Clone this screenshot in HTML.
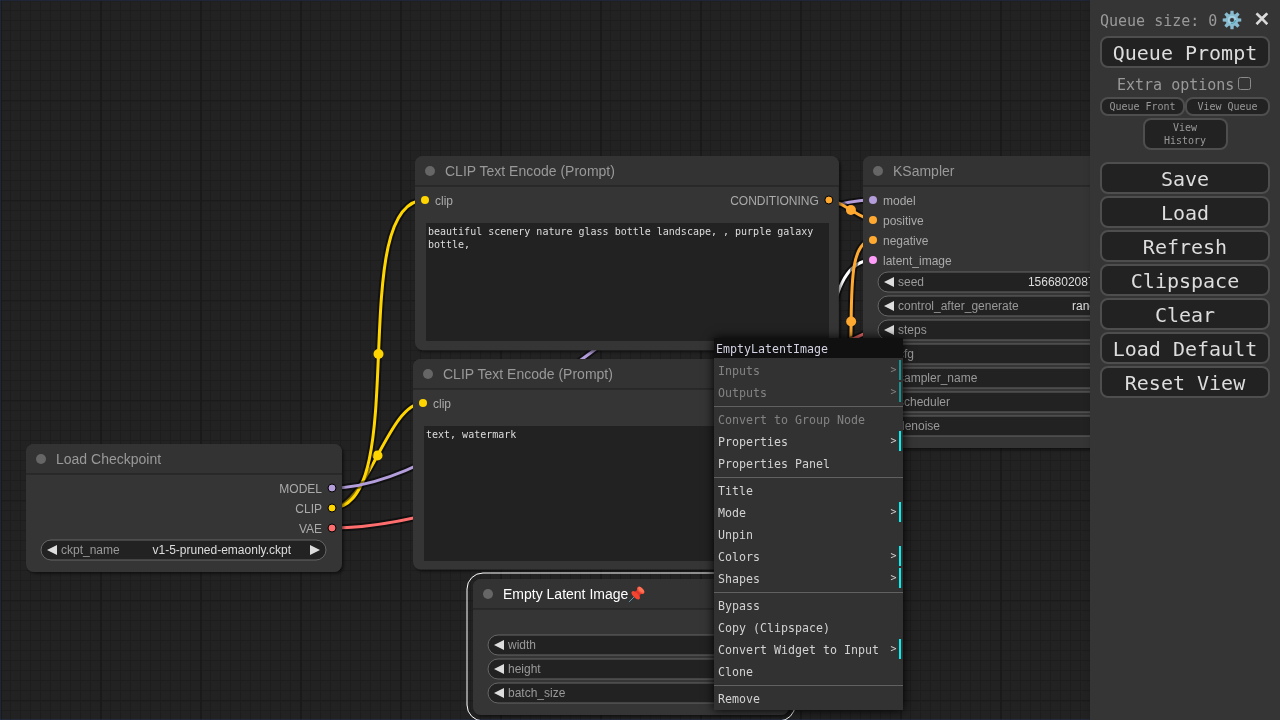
<!DOCTYPE html>
<html lang="en"><head><meta charset="utf-8"><title>ComfyUI</title>
<style>
html,body{margin:0;padding:0;}
body{width:1280px;height:720px;overflow:hidden;background:#222;position:relative;font-family:"DejaVu Sans Mono", "Liberation Mono", monospace;}
.layer{position:absolute;left:0;top:0;width:1280px;height:720px;will-change:transform;}
.graph{position:absolute;left:0;top:0;display:block;}
.t14{font:14px "Liberation Sans", Arial, sans-serif;}
.t12{font:12px "Liberation Sans", Arial, sans-serif;}
.ta{position:absolute;box-sizing:border-box;background:#222;color:#ddd;font:10px/13px "DejaVu Sans Mono", "Liberation Mono", monospace;padding:2px;white-space:pre-wrap;overflow:hidden;}
.menu{position:absolute;left:1090px;top:0;width:190px;height:720px;background:#353535;color:#999;font-size:15px;box-shadow:3px 3px 8px rgba(0,0,0,.4);}
.menu div,.menu span{position:absolute;box-sizing:border-box;white-space:nowrap;}
.menu .lbl{font-size:15px;line-height:20px;height:20px;}
.menu .b{left:10px;width:170px;height:32px;border:2px solid #4e4e4e;border-radius:8px;background:#222;color:#ddd;font-size:20px;line-height:28px;padding-top:1px;text-align:center;}
.menu .sb{width:85px;border:2px solid #4e4e4e;border-radius:8px;background:#222;color:#999;font-size:10px;line-height:13px;text-align:center;padding-top:1px;}
.menu .cb{left:148px;top:77px;width:13px;height:13px;border:1px solid #8a8a8a;border-radius:2.5px;background:#353535;}
.menu svg{position:absolute;display:block;}
.menu .close{left:160px;top:4px;width:24px;height:30px;font:20px/30px "DejaVu Sans", "Liberation Sans", sans-serif;color:#ddd;text-align:center;-webkit-text-stroke:0.6px #ddd;}
.ctx{position:absolute;left:714px;top:338px;width:189px;height:372px;background:#323232;box-shadow:0 0 10px #000;font:11.63px/16px "DejaVu Sans Mono", "Liberation Mono", monospace;color:#d2d2d2;}
.ctx .tt{background:#101010;color:#c8c8d7;padding:3px 2px 1px 2px;height:20px;box-sizing:border-box;white-space:nowrap;}
.ctx .tt{color:#d2d2e2;}
.ctx .e{margin:2px;padding:3px 2px 1px 2px;height:20px;box-sizing:border-box;position:relative;white-space:nowrap;}
.ctx .e.dis{opacity:.5;}
.ctx .e.sub{border-right:2px solid #00f2f2;}
.ctx .e .m{position:absolute;right:2.5px;top:1.5px;font-size:10px;}
.ctx .sep{border-top:1px solid #303030;border-bottom:1px solid #616161;height:0;margin:3px 0 2px 0;}
</style></head>
<body>
<div class="layer">
<svg class="graph" width="1280" height="720" viewBox="0 0 1280 720">
<defs>
<pattern id="grid" width="100" height="100" patternUnits="userSpaceOnUse">
<rect width="100" height="100" fill="#222"/>
<path d="M10.5 0V100M20.5 0V100M30.5 0V100M40.5 0V100M50.5 0V100M60.5 0V100M70.5 0V100M80.5 0V100M90.5 0V100M0 10.5H100M0 20.5H100M0 30.5H100M0 40.5H100M0 50.5H100M0 60.5H100M0 70.5H100M0 80.5H100M0 90.5H100" stroke="#1d1d1d" stroke-width="1" fill="none"/>
<path d="M0 1.5H100" stroke="#1f1f1f" stroke-width="1" fill="none"/><path d="M0 .5H100" stroke="#1b1b1b" stroke-width="1" fill="none"/><path d="M1 0V100" stroke="#1a1a1a" stroke-width="2" fill="none"/>
</pattern>
<filter id="sh" x="-5%" y="-10%" width="110%" height="125%"><feDropShadow dx="2" dy="2" stdDeviation="1.5" flood-color="#000" flood-opacity=".5"/></filter>
</defs>
<rect width="1280" height="720" fill="url(#grid)"/>
<rect x="0" y="0" width="1280" height="720" fill="none" stroke="#235" stroke-width="1"/>
<g fill="none" stroke-linecap="butt">
<path d="M332 508C366.74 508 388.26 403 423 403" stroke="#000" stroke-opacity=".5" stroke-width="7"/><path d="M332 508C366.74 508 388.26 403 423 403" stroke="#FFD500" stroke-width="3"/><circle cx="377.5" cy="455.5" r="5" fill="#FFD500" stroke="none"/>
<path d="M332 508C412.43 508 344.57 200 425 200" stroke="#000" stroke-opacity=".5" stroke-width="7"/><path d="M332 508C412.43 508 344.57 200 425 200" stroke="#FFD500" stroke-width="3"/><circle cx="378.5" cy="354" r="5" fill="#FFD500" stroke="none"/>
<path d="M779 623C872.74 623 779.26 260 873 260" stroke="#000" stroke-opacity=".5" stroke-width="7"/><path d="M779 623C872.74 623 779.26 260 873 260" stroke="#FFF" stroke-width="3"/><circle cx="826" cy="441.5" r="5" fill="#FFF" stroke="none"/>
<path d="M332 488C485.22 488 719.78 200 873 200" stroke="#000" stroke-opacity=".5" stroke-width="7"/><path d="M332 488C485.22 488 719.78 200 873 200" stroke="#B39DDB" stroke-width="3"/><circle cx="602.5" cy="344" r="5" fill="#B39DDB" stroke="none"/>
<path d="M828.85 200C840.97 200 860.88 220 873 220" stroke="#000" stroke-opacity=".5" stroke-width="7"/><path d="M828.85 200C840.97 200 860.88 220 873 220" stroke="#FFA931" stroke-width="3"/><circle cx="850.92" cy="210" r="5" fill="#FFA931" stroke="none"/>
<path d="M829.28 403C871.47 403 830.81 240 873 240" stroke="#000" stroke-opacity=".5" stroke-width="7"/><path d="M829.28 403C871.47 403 830.81 240 873 240" stroke="#FFA931" stroke-width="3"/><circle cx="851.14" cy="321.5" r="5" fill="#FFA931" stroke="none"/>
<path d="M332 528C566.57 528 984.43 222 1219 222" stroke="#000" stroke-opacity=".5" stroke-width="7"/><path d="M332 528C566.57 528 984.43 222 1219 222" stroke="#FF6E6E" stroke-width="3"/><circle cx="775.5" cy="375" r="5" fill="#FF6E6E" stroke="none"/>
</g>
<g transform="translate(413,389)">
<rect x="0" y="-30" width="426.28" height="210.61" rx="8" fill="#353535" filter="url(#sh)"/>
<path d="M0 0V-22a8 8 0 0 1 8-8H418.28a8 8 0 0 1 8 8V0Z" fill="#333"/>
<rect x="0" y="-1" width="426.28" height="2" fill="#000" fill-opacity=".2"/>
<circle cx="15" cy="-15" r="5" fill="#666"/>
<text x="30" y="-10" class="t14" fill="#999">CLIP Text Encode (Prompt)</text>
<circle cx="10" cy="14" r="4" fill="#FFD500"/><text x="20" y="19" class="t12" fill="#AAA">clip</text>
<circle cx="416.28" cy="14" r="4" fill="#FFA931" stroke="#000" stroke-width="1"/><text x="406.28" y="19" class="t12" fill="#AAA" text-anchor="end">CONDITIONING</text>
</g>
<g transform="translate(415,186)">
<rect x="0" y="-30" width="423.85" height="194.31" rx="8" fill="#353535" filter="url(#sh)"/>
<path d="M0 0V-22a8 8 0 0 1 8-8H415.85a8 8 0 0 1 8 8V0Z" fill="#333"/>
<rect x="0" y="-1" width="423.85" height="2" fill="#000" fill-opacity=".2"/>
<circle cx="15" cy="-15" r="5" fill="#666"/>
<text x="30" y="-10" class="t14" fill="#999">CLIP Text Encode (Prompt)</text>
<circle cx="10" cy="14" r="4" fill="#FFD500"/><text x="20" y="19" class="t12" fill="#AAA">clip</text>
<circle cx="413.85" cy="14" r="4" fill="#FFA931" stroke="#000" stroke-width="1"/><text x="403.85" y="19" class="t12" fill="#AAA" text-anchor="end">CONDITIONING</text>
</g>
<g transform="translate(863,186)">
<rect x="0" y="-30" width="316" height="292" rx="8" fill="#353535" filter="url(#sh)"/>
<path d="M0 0V-22a8 8 0 0 1 8-8H308a8 8 0 0 1 8 8V0Z" fill="#333"/>
<rect x="0" y="-1" width="316" height="2" fill="#000" fill-opacity=".2"/>
<circle cx="15" cy="-15" r="5" fill="#666"/>
<text x="30" y="-10" class="t14" fill="#999">KSampler</text>
<circle cx="10" cy="14" r="4" fill="#B39DDB"/><text x="20" y="19" class="t12" fill="#AAA">model</text>
<circle cx="10" cy="34" r="4" fill="#FFA931"/><text x="20" y="39" class="t12" fill="#AAA">positive</text>
<circle cx="10" cy="54" r="4" fill="#FFA931"/><text x="20" y="59" class="t12" fill="#AAA">negative</text>
<circle cx="10" cy="74" r="4" fill="#FF9CF9"/><text x="20" y="79" class="t12" fill="#AAA">latent_image</text>
<circle cx="306" cy="14" r="4" fill="#FF9CF9" stroke="#000" stroke-width="1"/><text x="296" y="19" class="t12" fill="#AAA" text-anchor="end">LATENT</text>
<rect x="15" y="86" width="285" height="20" rx="10" fill="#222" stroke="#666" stroke-width="1"/><path d="M31 91L21 96L31 101Z" fill="#DDD"/><path d="M284 91L294 96L284 101Z" fill="#DDD"/><text x="35" y="100" class="t12" fill="#999">seed</text><text x="265" y="100" class="t12" fill="#DDD" text-anchor="end">156680208700286</text>
<rect x="15" y="110" width="285" height="20" rx="10" fill="#222" stroke="#666" stroke-width="1"/><path d="M31 115L21 120L31 125Z" fill="#DDD"/><path d="M284 115L294 120L284 125Z" fill="#DDD"/><text x="35" y="124" class="t12" fill="#999">control_after_generate</text><text x="265" y="124" class="t12" fill="#DDD" text-anchor="end">randomize</text>
<rect x="15" y="134" width="285" height="20" rx="10" fill="#222" stroke="#666" stroke-width="1"/><path d="M31 139L21 144L31 149Z" fill="#DDD"/><path d="M284 139L294 144L284 149Z" fill="#DDD"/><text x="35" y="148" class="t12" fill="#999">steps</text><text x="265" y="148" class="t12" fill="#DDD" text-anchor="end">20</text>
<rect x="15" y="158" width="285" height="20" rx="10" fill="#222" stroke="#666" stroke-width="1"/><path d="M31 163L21 168L31 173Z" fill="#DDD"/><path d="M284 163L294 168L284 173Z" fill="#DDD"/><text x="35" y="172" class="t12" fill="#999">cfg</text><text x="265" y="172" class="t12" fill="#DDD" text-anchor="end">8.0</text>
<rect x="15" y="182" width="285" height="20" rx="10" fill="#222" stroke="#666" stroke-width="1"/><path d="M31 187L21 192L31 197Z" fill="#DDD"/><path d="M284 187L294 192L284 197Z" fill="#DDD"/><text x="35" y="196" class="t12" fill="#999">sampler_name</text><text x="265" y="196" class="t12" fill="#DDD" text-anchor="end">euler</text>
<rect x="15" y="206" width="285" height="20" rx="10" fill="#222" stroke="#666" stroke-width="1"/><path d="M31 211L21 216L31 221Z" fill="#DDD"/><path d="M284 211L294 216L284 221Z" fill="#DDD"/><text x="35" y="220" class="t12" fill="#999">scheduler</text><text x="265" y="220" class="t12" fill="#DDD" text-anchor="end">normal</text>
<rect x="15" y="230" width="285" height="20" rx="10" fill="#222" stroke="#666" stroke-width="1"/><path d="M31 235L21 240L31 245Z" fill="#DDD"/><path d="M284 235L294 240L284 245Z" fill="#DDD"/><text x="35" y="244" class="t12" fill="#999">denoise</text><text x="265" y="244" class="t12" fill="#DDD" text-anchor="end">1.00</text>
</g>
<g transform="translate(26,474)">
<rect x="0" y="-30" width="316" height="128" rx="8" fill="#353535" filter="url(#sh)"/>
<path d="M0 0V-22a8 8 0 0 1 8-8H308a8 8 0 0 1 8 8V0Z" fill="#333"/>
<rect x="0" y="-1" width="316" height="2" fill="#000" fill-opacity=".2"/>
<circle cx="15" cy="-15" r="5" fill="#666"/>
<text x="30" y="-10" class="t14" fill="#999">Load Checkpoint</text>
<circle cx="306" cy="14" r="4" fill="#B39DDB" stroke="#000" stroke-width="1"/><text x="296" y="19" class="t12" fill="#AAA" text-anchor="end">MODEL</text>
<circle cx="306" cy="34" r="4" fill="#FFD500" stroke="#000" stroke-width="1"/><text x="296" y="39" class="t12" fill="#AAA" text-anchor="end">CLIP</text>
<circle cx="306" cy="54" r="4" fill="#FF6E6E" stroke="#000" stroke-width="1"/><text x="296" y="59" class="t12" fill="#AAA" text-anchor="end">VAE</text>
<rect x="15" y="66" width="285" height="20" rx="10" fill="#222" stroke="#666" stroke-width="1"/><path d="M31 71L21 76L31 81Z" fill="#DDD"/><path d="M284 71L294 76L284 81Z" fill="#DDD"/><text x="35" y="80" class="t12" fill="#999">ckpt_name</text><text x="265" y="80" class="t12" fill="#DDD" text-anchor="end">v1-5-pruned-emaonly.ckpt</text>
</g>
<g transform="translate(473,609)">
<rect x="0" y="-30" width="316" height="136" rx="8" fill="#353535" filter="url(#sh)"/>
<path d="M0 0V-22a8 8 0 0 1 8-8H308a8 8 0 0 1 8 8V0Z" fill="#333"/>
<rect x="0" y="-1" width="316" height="2" fill="#000" fill-opacity=".2"/>
<circle cx="15" cy="-15" r="5" fill="#666"/>
<text x="30" y="-10" class="t14" fill="#FFF">Empty Latent Image</text>
<g transform="translate(162.7,-13.7) rotate(-45)"><path d="M-9.6 0L-2 0" stroke="#68a9c2" stroke-width="0.8" fill="none"/><path d="M0 -4.6Q3.6 -1.3 7 -3.6L7 3.6Q3.6 1.3 0 4.6Z" fill="#d9352c"/><ellipse cx="0" cy="0" rx="2.4" ry="5.3" fill="#f4442f"/><ellipse cx="7.1" cy="0" rx="2.5" ry="4.4" fill="#f9503a"/><ellipse cx="7.7" cy="0" rx="1.7" ry="3.7" fill="#ff7355"/></g>
<rect x="-6" y="-36" width="328" height="148" rx="16" fill="none" stroke="#FFF" stroke-width="1"/>
<circle cx="306" cy="14" r="4" fill="#FF9CF9" stroke="#000" stroke-width="1"/><text x="296" y="19" class="t12" fill="#AAA" text-anchor="end">LATENT</text>
<rect x="15" y="26" width="285" height="20" rx="10" fill="#222" stroke="#666" stroke-width="1"/><path d="M31 31L21 36L31 41Z" fill="#DDD"/><path d="M284 31L294 36L284 41Z" fill="#DDD"/><text x="35" y="40" class="t12" fill="#999">width</text><text x="265" y="40" class="t12" fill="#DDD" text-anchor="end">512</text>
<rect x="15" y="50" width="285" height="20" rx="10" fill="#222" stroke="#666" stroke-width="1"/><path d="M31 55L21 60L31 65Z" fill="#DDD"/><path d="M284 55L294 60L284 65Z" fill="#DDD"/><text x="35" y="64" class="t12" fill="#999">height</text><text x="265" y="64" class="t12" fill="#DDD" text-anchor="end">512</text>
<rect x="15" y="74" width="285" height="20" rx="10" fill="#222" stroke="#666" stroke-width="1"/><path d="M31 79L21 84L31 89Z" fill="#DDD"/><path d="M284 79L294 84L284 89Z" fill="#DDD"/><text x="35" y="88" class="t12" fill="#999">batch_size</text><text x="265" y="88" class="t12" fill="#DDD" text-anchor="end">1</text>
</g>
</svg>
<div class="ta" style="left:426px;top:223px;width:403px;height:118px;">beautiful scenery nature glass bottle landscape, , purple galaxy bottle,</div>
<div class="ta" style="left:424px;top:426px;width:405px;height:135px;">text, watermark</div>
<div class="menu">
<div class="lbl" style="left:10px;top:11px;">Queue size: 0</div>
<svg style="left:131.2px;top:9.4px" width="22" height="22" viewBox="-11 -11 22 22"><path d="M-1.8 -5.83L-1.54 -9.27L1.54 -9.27L1.8 -5.83L2.85 -5.4L5.46 -7.65L7.65 -5.46L5.4 -2.85L5.83 -1.8L9.27 -1.54L9.27 1.54L5.83 1.8L5.4 2.85L7.65 5.46L5.46 7.65L2.85 5.4L1.8 5.83L1.54 9.27L-1.54 9.27L-1.8 5.83L-2.85 5.4L-5.46 7.65L-7.65 5.46L-5.4 2.85L-5.83 1.8L-9.27 1.54L-9.27 -1.54L-5.83 -1.8L-5.4 -2.85L-7.65 -5.46L-5.46 -7.65L-2.85 -5.4Z" fill="#88bbd0"/><circle r="6.1" fill="#88bbd0"/><circle r="3.4" fill="none" stroke="#a8d4e4" stroke-width="1.3"/><path d="M3.4 0A3.4 3.4 0 0 1 -1.2 3.2" fill="none" stroke="#4fa0b5" stroke-width="1.3"/><circle r="2" fill="#353535"/></svg>
<div class="close">✕</div>
<div class="b" style="top:36px">Queue Prompt</div>
<div class="lbl" style="left:27px;top:75px;">Extra options</div><span class="cb"></span>
<div class="sb" style="left:10px;top:97px;height:19px;">Queue Front</div><div class="sb" style="left:95px;top:97px;height:19px;">View Queue</div>
<div class="sb" style="left:52.5px;top:118px;height:32px;">View<br>History</div>
<div class="b" style="top:162px">Save</div>
<div class="b" style="top:196px">Load</div>
<div class="b" style="top:230px">Refresh</div>
<div class="b" style="top:264px">Clipspace</div>
<div class="b" style="top:298px">Clear</div>
<div class="b" style="top:332px">Load Default</div>
<div class="b" style="top:366px">Reset View</div>
</div>
<div class="ctx">
<div class="tt">EmptyLatentImage</div>
<div class="e sub dis">Inputs<span class="m">&gt;</span></div>
<div class="e sub dis">Outputs<span class="m">&gt;</span></div>
<div class="sep"></div>
<div class="e dis">Convert to Group Node</div>
<div class="e sub">Properties<span class="m">&gt;</span></div>
<div class="e">Properties Panel</div>
<div class="sep"></div>
<div class="e">Title</div>
<div class="e sub">Mode<span class="m">&gt;</span></div>
<div class="e">Unpin</div>
<div class="e sub">Colors<span class="m">&gt;</span></div>
<div class="e sub">Shapes<span class="m">&gt;</span></div>
<div class="sep"></div>
<div class="e">Bypass</div>
<div class="e">Copy (Clipspace)</div>
<div class="e sub">Convert Widget to Input<span class="m">&gt;</span></div>
<div class="e">Clone</div>
<div class="sep"></div>
<div class="e">Remove</div>
</div>
</div>
</body></html>
